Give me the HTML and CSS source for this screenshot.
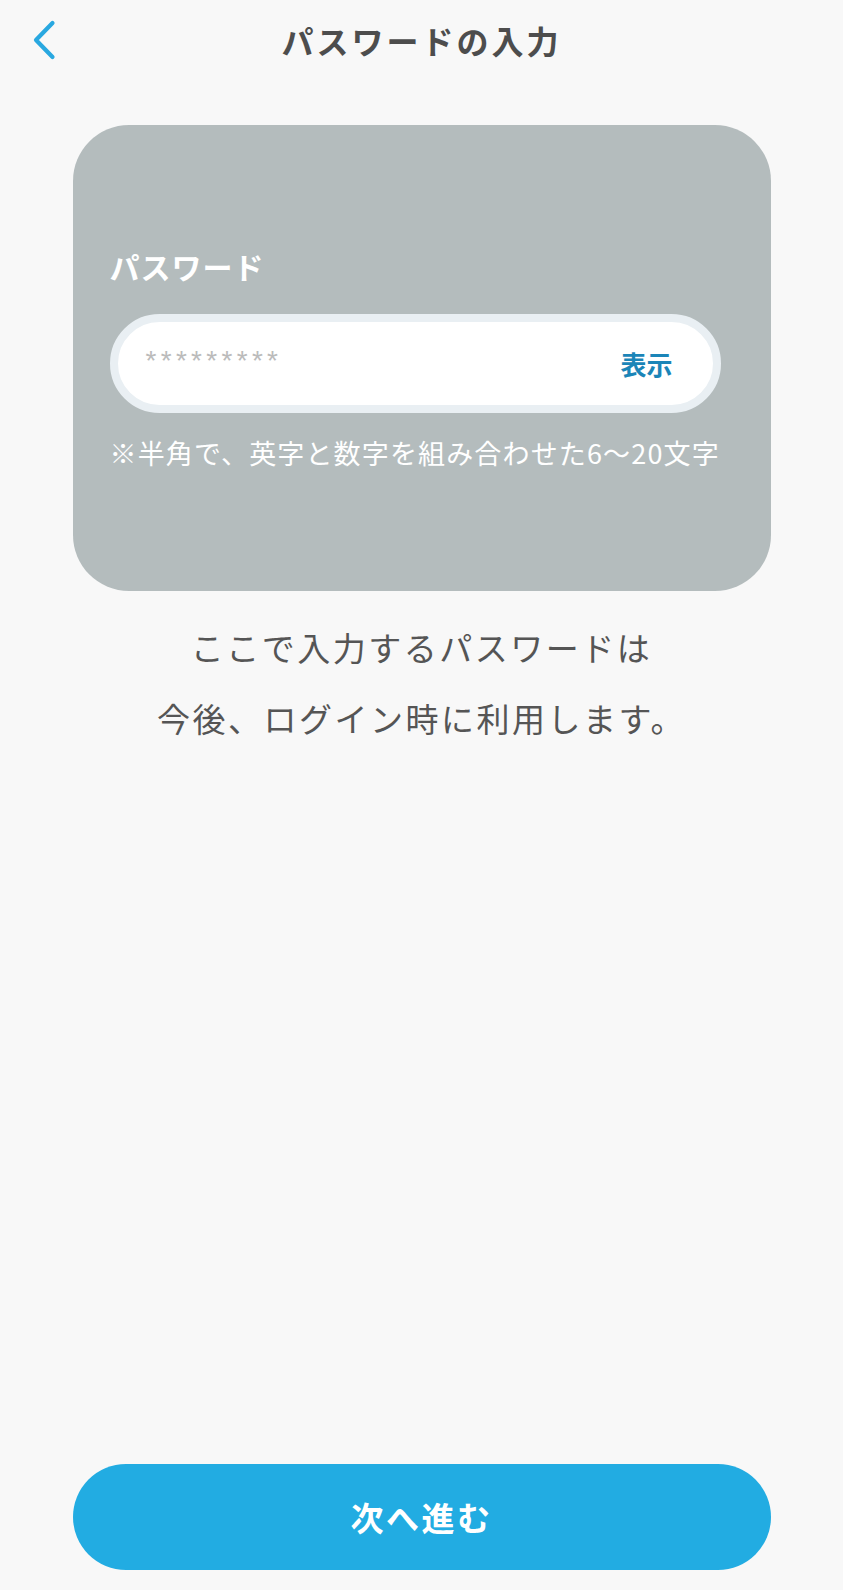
FILE: index.html
```html
<!DOCTYPE html>
<html lang="ja">
<head>
<meta charset="utf-8">
<link rel="stylesheet" href="styles.css">
</head>
<body>
<div class="screen">
  <header class="topbar">
    <span class="back">
      <svg width="26" height="40" viewBox="0 0 26 40"><path d="M21.5 3 L5 20 L21.5 37" fill="none" stroke="#29a8e0" stroke-width="4.2" stroke-linecap="round" stroke-linejoin="round"/></svg>
    </span>
    <h1 class="title">パスワードの入力</h1>
  </header>
  <main class="content">
    <section class="card">
      <div class="label">パスワード</div>
      <div class="field">
        <span class="mask">*********</span>
        <span class="toggle">表示</span>
      </div>
      <p class="note">※半角で、英字と数字を組み合わせた6～20文字</p>
    </section>
    <p class="info">ここで入力するパスワードは<br>今後、ログイン時に利用します。</p>
  </main>
  <footer class="actions">
    <button class="next">次へ進む</button>
  </footer>
</div>
</body>
</html>
```
FILE: styles.css
```css
* { box-sizing: border-box; }
html, body { margin: 0; padding: 0; }
body {
  background: #f8f8f8;
  font-family: "Noto Sans CJK JP", "Noto Sans", sans-serif;
}
.screen {
  width: 843px;
  min-height: 1590px;
  display: flex;
  flex-direction: column;
}
.topbar {
  position: relative;
  height: 80px;
  display: flex;
  align-items: center;
  justify-content: center;
}
.back {
  position: absolute;
  left: 31px;
  top: 20px;
  display: flex;
}
.title {
  margin: 0;
  font-size: 32px;
  font-weight: 700;
  color: #4d4d4d;
  letter-spacing: 3px;
}
.content {
  flex: 1;
  display: flex;
  flex-direction: column;
  align-items: center;
  padding-top: 45px;
}
.card {
  width: 698px;
  height: 466px;
  background: #b4bcbd;
  border-radius: 56px;
  padding: 120px 50px 0 37px;
}
.label {
  color: #fff;
  font-size: 30px;
  font-weight: 700;
  line-height: 42px;
  letter-spacing: 1px;
}
.field {
  margin-top: 27px;
  height: 99px;
  border: 8px solid #e9eff3;
  border-radius: 50px;
  background: #fff;
  display: flex;
  align-items: center;
  justify-content: space-between;
  padding: 0 40px 0 28px;
}
.mask {
  font-family: "Liberation Sans", sans-serif;
  color: #bbbbbb;
  font-size: 28px;
  letter-spacing: 4.3px;
  margin-top: -6px;
}
.toggle {
  color: #1b85b8;
  font-size: 26px;
  font-weight: 700;
}
.note {
  margin: 20px 0 0;
  color: #fff;
  font-size: 27px;
  line-height: 40px;
  letter-spacing: 1.15px;
  white-space: nowrap;
}
.info {
  margin: 21px 0 0;
  text-align: center;
  color: #555;
  font-size: 33px;
  line-height: 71px;
  letter-spacing: 2.5px;
}
.actions {
  display: flex;
  justify-content: center;
  padding-bottom: 20px;
}
.next {
  width: 698px;
  height: 106px;
  border: none;
  border-radius: 53px;
  background: #22ace2;
  color: #fff;
  font-family: "Noto Sans CJK JP", "Noto Sans", sans-serif;
  font-size: 33px;
  font-weight: 700;
  letter-spacing: 2.5px;
}
```
